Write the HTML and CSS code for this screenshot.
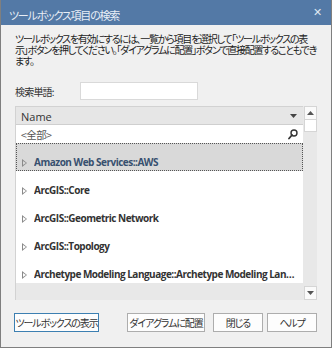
FILE: index.html
```html
<!DOCTYPE html>
<html lang="ja">
<head>
    <meta charset="UTF-8">
    <title>ツールボックス項目の検索</title>
    <link rel="stylesheet" href="styles.css">
</head>
<body>
    <div class="dialog">
        <!-- Title bar -->
        <div class="titlebar">
            <span class="title">ツールボックス項目の検索</span>
            <span class="close">&#x2715;</span>
        </div>

        <div class="content">
            <p class="desc">ツールボックスを有効にするには、一覧から項目を選択して「ツールボックスの表<br>示」ボタンを押してください。「ダイアグラムに配置」ボタンで直接配置することもでき<br>ます。</p>

            <div class="search-row">
                <label for="term">検索単語:</label>
                <input id="term" type="text">
            </div>

            <!-- Item list -->
            <div class="grid">
                <div class="grid-main">
                    <div class="grid-header">
                        <span>Name</span>
                        <svg class="caret" width="7" height="4" viewBox="0 0 7 4"><path d="M0 0h7L3.5 4z" fill="#444"/></svg>
                    </div>
                    <div class="grid-filter">
                        <span>&lt;全部&gt;</span>
                        <svg class="magnifier" width="10" height="11" viewBox="0 0 10 11">
                            <circle cx="6" cy="4" r="3" fill="none" stroke="#333" stroke-width="1.4"/>
                            <path d="M4 6L1 9.5" stroke="#333" stroke-width="1.8" stroke-linecap="round"/>
                        </svg>
                    </div>
                    <ul class="rows">
                        <li class="row selected"><span class="arrow"></span><span class="label">Amazon Web Services::AWS</span></li>
                        <li class="row"><span class="arrow"></span><span class="label">ArcGIS::Core</span></li>
                        <li class="row"><span class="arrow"></span><span class="label">ArcGIS::Geometric Network</span></li>
                        <li class="row"><span class="arrow"></span><span class="label">ArcGIS::Topology</span></li>
                        <li class="row"><span class="arrow"></span><span class="label">Archetype Modeling Language::Archetype Modeling Language</span></li>
                    </ul>
                </div>
                <div class="scrollbar">
                    <div class="sb-btn"><svg width="7" height="4" viewBox="0 0 7 4"><path d="M0 4h7L3.5 0z" fill="#555"/></svg></div>
                    <div class="sb-thumb"></div>
                    <div class="sb-track"></div>
                    <div class="sb-btn"><svg width="7" height="4" viewBox="0 0 7 4"><path d="M0 0h7L3.5 4z" fill="#555"/></svg></div>
                </div>
            </div>

            <!-- Buttons -->
            <div class="buttons">
                <button class="btn default">ツールボックスの表示</button>
                <span class="spacer"></span>
                <button class="btn wide">ダイアグラムに配置</button>
                <button class="btn">閉じる</button>
                <button class="btn">ヘルプ</button>
            </div>
        </div>
    </div>
</body>
</html>
```

FILE: styles.css
```css
* {
    margin: 0;
    padding: 0;
    box-sizing: border-box;
}

body {
    font-family: "Noto Sans CJK JP", "Noto Sans", sans-serif;
    font-feature-settings: "palt";
    background: #f0f0f0;
    color: #222;
}

.dialog {
    width: 332px;
    height: 348px;
    border: 1px solid #7f7f7f;
    border-top: none;
    background: #f0f0f0;
    display: flex;
    flex-direction: column;
    overflow: hidden;
}

/* Title bar */
.titlebar {
    height: 25px;
    margin: 0 -1px;
    background: #5379a6;
    color: #e8eef6;
    display: flex;
    align-items: center;
    justify-content: space-between;
    padding: 0 10px 0 9px;
}

.title {
    font-size: 11px;
    letter-spacing: -1.2px;
    margin-top: 4px;
}

.close {
    font-size: 11px;
    color: #dfe7f1;
    align-self: flex-start;
    margin-top: 3px;
}

.content {
    padding: 0 14px 0 13px;
    display: flex;
    flex-direction: column;
    flex: 1;
}

.desc {
    font-size: 10px;
    line-height: 11px;
    margin-top: 8px;
    margin-left: 1px;
    color: #222;
    white-space: nowrap;
    letter-spacing: -1.25px;
}

.search-row {
    display: flex;
    align-items: center;
    margin-top: 16px;
    margin-left: 1px;
    height: 18px;
}

.search-row label {
    font-size: 10px;
    letter-spacing: -0.8px;
    width: 65px;
    color: #333;
}

.search-row input {
    width: 118px;
    height: 18px;
    border: 1px solid #d9d9d9;
    background: #fff;
    outline: none;
}

/* Grid */
.grid {
    display: flex;
    margin-top: 6px;
    margin-left: 1px;
    height: 194px;
    background: #e8e8e8;
}

.grid-main {
    flex: 1;
    min-width: 0;
    border-left: 1px solid #d2d2d2;
    display: flex;
    flex-direction: column;
}

.grid-header {
    height: 19px;
    background: #e6e6e6;
    border-top: 1px solid #d2d2d2;
    border-bottom: 1px solid #cfcfcf;
    display: flex;
    align-items: center;
    justify-content: space-between;
    padding: 1px 6px 0 5px;
    font-family: "Open Sans", "Noto Sans", sans-serif;
    font-size: 11px;
    color: #333;
}

.grid-filter {
    height: 18px;
    background: #fff;
    display: flex;
    align-items: center;
    justify-content: space-between;
    padding: 1px 5px 0 5px;
    font-size: 10.5px;
    letter-spacing: -0.6px;
    color: #555;
}

.rows {
    list-style: none;
}

.row {
    height: 28px;
    background: #fff;
    display: flex;
    align-items: flex-start;
    padding: 11px 0 0 5px;
    border: 1px solid transparent;
}

.row.selected {
    background: #d9d9d9;
    border: 1px dotted #555;
}

.row.selected .label {
    color: #37506f;
}

.arrow {
    width: 0;
    height: 0;
    border-left: 5px solid #8a8a8a;
    border-top: 4px solid transparent;
    border-bottom: 4px solid transparent;
    position: relative;
    margin-right: 7px;
    margin-top: 4px;
}

.arrow::after {
    content: "";
    position: absolute;
    left: -4px;
    top: -2.5px;
    border-left: 3px solid #fff;
    border-top: 2.5px solid transparent;
    border-bottom: 2.5px solid transparent;
}

.row.selected .arrow::after {
    border-left-color: #d9d9d9;
}

.label {
    font-family: "Open Sans", "Noto Sans", sans-serif;
    font-weight: 700;
    font-size: 10px;
    line-height: 14px;
    letter-spacing: -0.5px;
    color: #333;
    white-space: nowrap;
    overflow: hidden;
    text-overflow: ellipsis;
    padding-right: 3px;
}

/* Scrollbar */
.scrollbar {
    width: 14px;
    display: flex;
    flex-direction: column;
    align-items: center;
    padding: 0 1px;
}

.sb-btn {
    width: 13px;
    height: 14px;
    background: #fafafa;
    border: 1px solid #d5d5d5;
    display: flex;
    align-items: center;
    justify-content: center;
}

.sb-thumb {
    width: 13px;
    height: 12px;
    background: #fff;
    border: 1px solid #d5d5d5;
    border-top: none;
}

.sb-track {
    flex: 1;
}

/* Buttons */
.buttons {
    display: flex;
    margin-top: 13px;
    gap: 4px;
}

.spacer {
    flex: 1;
}

.btn {
    height: 19px;
    width: 50px;
    padding: 0;
    background: #fdfdfd;
    border: 1px solid #adadad;
    font-family: "Noto Sans CJK JP", sans-serif;
    font-feature-settings: "palt";
    font-size: 10px;
    color: #333;
    letter-spacing: -1.1px;
    white-space: nowrap;
}

.btn.wide {
    width: 78px;
    margin-right: 4px;
}

.btn.default {
    width: 85px;
    border-color: #3c7fb1;
}
```
